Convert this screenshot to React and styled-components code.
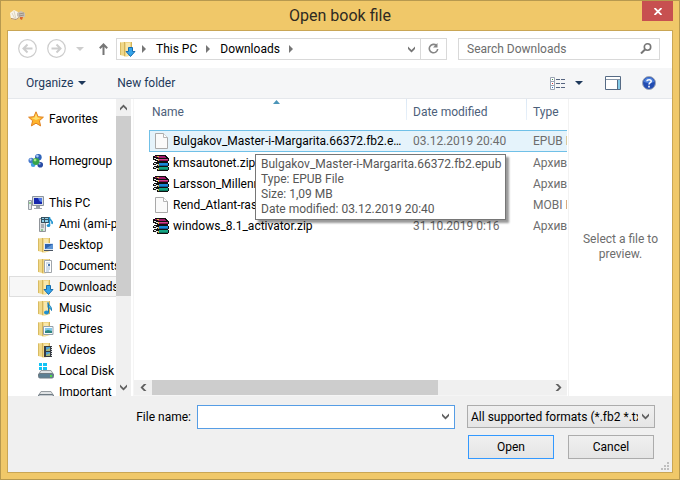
import React from "react";
import styled, { createGlobalStyle, css } from "styled-components";

const GlobalStyle = createGlobalStyle`
  *, *::before, *::after { box-sizing: border-box; }
  body { margin: 0; }
  body, button, input, select {
    font-family: Roboto, "Noto Sans", sans-serif;
    font-size: 12px;
    line-height: 16px;
    color: #000;
  }
  svg { display: block; flex: none; }
`;

const Window = styled.main`
  height: 100vh;
  display: flex;
  flex-direction: column;
  background: #f0c869;
  border: 1px solid #b7994f;
  padding: 0 6px 6px;
`;

const TitleBar = styled.header`
  flex: none;
  height: 29px;
  display: grid;
  grid-template-columns: 28px 1fr 31px;
  align-items: center;
  padding-left: 3px;
`;

const Title = styled.h1`
  margin: 0;
  font-size: 16px;
  line-height: 20px;
  font-weight: 400;
  text-align: center;
  color: #2e2a22;
`;

const CloseButton = styled.button`
  align-self: start;
  height: 20px;
  border: 0;
  padding: 0;
  display: grid;
  place-items: center;
  background: #c75050;
`;

const Client = styled.div`
  flex: 1;
  min-height: 0;
  display: flex;
  flex-direction: column;
  border: 1px solid #c9a655;
  background: #fff;
`;

const Gap = styled.span`
  flex: none;
  width: ${(p) => p.$w}px;
`;

const NavBar = styled.nav`
  flex: none;
  display: flex;
  align-items: center;
  height: 37px;
  padding: 0 12px 2px 10px;
`;

const IconButton = styled.button`
  flex: none;
  border: 0;
  padding: 0;
  background: none;
  display: grid;
  place-items: center;
  height: 21px;
  width: ${(p) => p.$w}px;
`;

const AddressBar = styled.div`
  flex: 331 1 331px;
  min-width: 0;
  height: 22px;
  display: flex;
  align-items: center;
  border: 1px solid #d9d9d9;
  padding-left: 3px;
`;

const Crumb = styled.a`
  color: #000;
  text-decoration: none;
  white-space: nowrap;
  padding: 0 3px 0 4px;
`;

const RefreshCell = styled.div`
  margin-left: auto;
  align-self: stretch;
  display: flex;
`;

const RefreshButton = styled(IconButton)`
  height: auto;
  border-left: 1px solid #d9d9d9;
`;

const SearchBox = styled.div`
  flex: 202 1 202px;
  min-width: 0;
  margin-left: 11px;
  height: 22px;
  display: flex;
  align-items: center;
  border: 1px solid #d9d9d9;
  padding: 0 4px 0 8px;
`;

const SearchInput = styled.input`
  flex: 1;
  min-width: 0;
  border: 0;
  padding: 0;
  outline: none;
  background: none;
  &::placeholder { color: #6d6d6d; opacity: 1; }
`;

const Toolbar = styled.div`
  flex: none;
  height: 31px;
  display: flex;
  align-items: center;
  background: #f5f6f7;
  border-bottom: 1px solid #e5e8ec;
  padding: 0 16px 0 18px;
`;

const ToolButton = styled.button`
  border: 0;
  padding: 0;
  background: none;
  display: flex;
  align-items: center;
  gap: ${(p) => p.$gap || 5}px;
  margin-right: ${(p) => p.$after || 0}px;
  color: #1e395b;
`;

const Spacer = styled.div`
  flex: 1;
`;

const Panes = styled.div`
  flex: 1;
  min-height: 0;
  display: flex;
`;

const Sidebar = styled.aside`
  flex: none;
  width: 123px;
  display: flex;
`;

const Tree = styled.ul`
  flex: 1;
  min-width: 0;
  margin: 0;
  padding: 9px 0 0 1px;
  list-style: none;
  overflow: hidden;
`;

const TreeItem = styled.li`
  margin-bottom: ${(p) => (p.$gap ? 21 : 0)}px;
`;

const TreeLink = styled.a`
  height: 21px;
  display: flex;
  align-items: center;
  gap: 5px;
  padding-left: ${(p) => (p.$child ? 28 : 18)}px;
  border: 1px solid transparent;
  border-right: 0;
  white-space: nowrap;
  overflow: hidden;
  color: #000;
  text-decoration: none;
  ${(p) => p.$selected && css`
    background: #f7f7f7;
    border-color: #dedede;
  `}
`;

const VScroll = styled.div`
  flex: none;
  width: 15px;
  display: flex;
  flex-direction: column;
  background: #f0f0f0;
`;

const VThumb = styled.div`
  flex: 180 1 0;
  background: #cdcdcd;
`;

const VTrack = styled.div`
  flex: 83 1 0;
`;

const HScroll = styled.div`
  flex: none;
  height: 16px;
  display: flex;
  background: #f0f0f0;
  border-bottom: 1px solid #f5f5f5;
`;

const HThumb = styled.div`
  flex: 287 1 0;
  background: #cdcdcd;
`;

const HTrack = styled.div`
  flex: 111 1 0;
`;

const ArrowButton = styled.button`
  flex: none;
  border: 0;
  padding: 0;
  background: none;
  display: grid;
  place-items: center;
  width: ${(p) => p.$w}px;
  height: ${(p) => p.$h}px;
`;

const FilePane = styled.section`
  flex: 1;
  min-width: 0;
  margin-left: 2px;
  border-left: 1px solid #f5f5f5;
  display: flex;
  flex-direction: column;
`;

const FileArea = styled.div`
  flex: 1;
  min-height: 0;
  overflow: hidden;
  position: relative;
  padding-left: 15px;
`;

const FileTable = styled.table`
  width: 600px;
  table-layout: fixed;
  border-collapse: separate;
  border-spacing: 0;
`;

const HeadCell = styled.th`
  width: ${(p) => p.$w}px;
  height: 31px;
  padding: 4px 0 0 ${(p) => p.$pad}px;
  text-align: left;
  vertical-align: top;
  font-weight: 400;
  color: #4c607a;
  line-height: 18px;
  background: linear-gradient(#dbe8f5, #e8f1fa) no-repeat right top;
  background-size: ${(p) => (p.$w ? "1px 21px" : "0 0")};
`;

const SortMark = styled.svg`
  position: absolute;
  left: 139px;
  top: 1px;
`;

const Row = styled.tr`
  td {
    height: 21px;
    padding: 0 0 0 6px;
    white-space: nowrap;
    overflow: hidden;
    color: #6d6d6d;
    border-top: 1px solid transparent;
    border-bottom: 1px solid transparent;
  }
  td:first-child { padding-left: 4px; color: #000; }
  ${(p) => p.$selected && css`
    td {
      height: 22px;
      background: #e5f3fb;
      border-color: #70c0e7;
    }
    td:first-child {
      border-left: 1px solid #70c0e7;
      padding-left: 3px;
    }
  `}
`;

const FileName = styled.span`
  display: flex;
  align-items: center;
  gap: 4px;
  line-height: 16px;
`;

const FileLabel = styled.span`
  overflow: hidden;
  text-overflow: ellipsis;
`;

const Tooltip = styled.div`
  position: absolute;
  left: 121px;
  top: 55px;
  padding: 2px 4px 2px 5px;
  border: 1px solid #767676;
  background: #fff;
  color: #575757;
  line-height: 15px;
  white-space: nowrap;
  box-shadow: 3px 3px 2px rgba(0, 0, 0, 0.4);
`;

const Preview = styled.aside`
  flex: none;
  width: 104px;
  margin-left: 1px;
  border-left: 1px solid #f2f2f2;
  display: grid;
  place-items: center;
  padding: 0 8px 2px;
  text-align: center;
  line-height: 15px;
  color: #6d6d6d;
`;

const Footer = styled.footer`
  flex: none;
  height: 76px;
  background: #f0f0f0;
  display: grid;
  grid-template-columns: 181px 1fr 188px;
  grid-template-rows: 24px 24px;
  row-gap: 6px;
  padding: 9px 17px 0 8px;
  position: relative;
`;

const NameLabel = styled.label`
  justify-self: end;
  align-self: center;
  padding-right: 6px;
`;

const NameCombo = styled.div`
  display: flex;
  background: #fff;
  border: 1px solid #569de5;
  margin-right: 12px;
`;

const NameInput = styled.input`
  flex: 1;
  min-width: 0;
  border: 0;
  outline: none;
  background: none;
  padding: 0 4px;
`;

const FormatField = styled.div`
  display: grid;
  height: 23px;
  align-items: center;
  border: 1px solid #acacac;
  background: linear-gradient(#f0f0f0, #e5e5e5);
  > * { grid-area: 1 / 1; }
  > svg { justify-self: end; margin-right: 4px; pointer-events: none; }
`;

const FormatSelect = styled.select`
  appearance: none;
  min-width: 0;
  width: calc(100% - 16px);
  height: 21px;
  border: 0;
  outline: none;
  padding: 0 0 0 3px;
  background: none;
  overflow: hidden;
  text-overflow: clip;
`;

const Actions = styled.div`
  grid-column: 3;
  display: grid;
  grid-template-columns: 1fr 1fr;
  gap: 14px;
  padding: 0 1px;
`;

const DialogButton = styled.button`
  border: 1px solid ${(p) => (p.$primary ? "#3399ff" : "#acacac")};
  background: linear-gradient(#f0f0f0, #e5e5e5);
  padding: 0 0 1px;
`;

const Grip = styled.svg`
  position: absolute;
  right: 3px;
  bottom: 2px;
`;

function Chevron({ dir = "down", color = "#606060" }) {
  const turn = { down: 0, left: 90, up: 180, right: 270 }[dir];
  return (
    <svg width="9" height="9" viewBox="0 0 9 9" aria-hidden="true">
      <path d="M1 1.500v2.600l3.500 3.400L8 4.100V1.500L4.500 5z" fill={color} transform={`rotate(${turn} 4.5 4.5)`} />
    </svg>
  );
}

function Triangle({ dir = "down", color }) {
  return dir === "down" ? (
    <svg width="8" height="4" viewBox="0 0 8 4" aria-hidden="true"><path d="M0 0h8L4 4z" fill={color} /></svg>
  ) : (
    <svg width="4" height="8" viewBox="0 0 4 8" aria-hidden="true"><path d="M0 0v8l4-4z" fill={color} /></svg>
  );
}

function CircleArrow({ back }) {
  return (
    <svg width="19" height="19" viewBox="0 0 19 19" fill="none" stroke="#cdcdcd" aria-hidden="true">
      <circle cx="9.5" cy="9.5" r="8.8" strokeWidth="1.2" />
      <path
        d={back ? "M14.5 9.5H6M9.5 5.5l-4 4 4 4" : "M4.5 9.5H13M9.5 5.5l4 4-4 4"}
        strokeWidth="2"
      />
    </svg>
  );
}

const overlays = {
  desktop: (
    <g>
      <path d="M6 6h9v7H6z" fill="#dfe8f1" />
      <path d="M7 7h8v5H7z" fill="#2d62ae" />
      <path d="M7 12l8-5v5z" fill="#5c93d4" />
      <path d="M6 13h9v1H6z" fill="#4b5563" />
    </g>
  ),
  documents: (
    <g>
      <path d="M6.5 2.5h7v12h-7z" fill="#fff" stroke="#a0a5aa" />
      <path d="M8 5h4M8 7h1M8 9h4M8 11h4M8 13h3" stroke="#9db8d8" />
      <path d="M10 6h2v2h-2z" fill="#4775ad" />
    </g>
  ),
  downloads: <path d="M8.5 6.500h4v4h2.500l-4.500 5-4.500-5h2.500z" fill="#35a4ea" stroke="#176dae" />,
  music: (
    <g>
      <path d="M10 2.500c0 3 4 3 3.500 8-.5-2-2-2.500-3.500-3z" fill="#4fbce9" stroke="#1c7fb7" />
      <ellipse cx="8.500" cy="12.500" rx="2.500" ry="2" fill="#2291ce" />
      <path d="M10.500 4v8.500" stroke="#1878b4" />
    </g>
  ),
  pictures: (
    <g>
      <path d="M5.500 5.500h9.500v8H5.500z" fill="#f8fafb" stroke="#95a0aa" />
      <path d="M7 7h7v5H7z" fill="#80c8e9" />
      <path d="M7 12v-2l3-1 4 1v2z" fill="#2e8780" />
    </g>
  ),
  videos: (
    <g>
      <path d="M6 4h8v11H6z" fill="#373b42" />
      <path d="M8 5h4v4H8zM8 10h4v4H8z" fill="#4da0d8" />
      <path d="M8 8l4-2v3H8zM8 13l4-2v3H8z" fill="#a6b879" />
      <path d="M13.500 5v10" stroke="#dce1e7" strokeDasharray="1 1" />
    </g>
  ),
};

function FolderIcon({ kind }) {
  return (
    <svg width="16" height="16" viewBox="0 0 16 16" aria-hidden="true">
      <path d="M0 1.500l4-.5v14l-4-1z" fill="#f0d888" />
      <path d="M0 1.500h1V14H0z" fill="#d9bb62" />
      <path d="M4 1h8v13l-5 1.500H4z" fill="#efd585" />
      <path d="M6 2h4v12l-4 1z" fill="#f8e7ab" />
      <path d="M4.500 1v14" stroke="#d3b35a" />
      <path d="M11.500 1v13" stroke="#d3b35a" />
      {overlays[kind]}
    </svg>
  );
}

function StarIcon() {
  return (
    <svg width="16" height="16" viewBox="0 0 16 16" aria-hidden="true">
      <path d="M8 .8l2.100 4.900 5.300.5-4 3.500 1.200 5.200L8 12.200l-4.600 2.700 1.200-5.200-4-3.500 5.300-.5z" fill="#ffb52c" stroke="#e08121" strokeLinejoin="round" />
      <path d="M8 2.500l1.400 4 3.600.500-5 2-4.500-2 3.200-.4z" fill="#ffdf6f" />
    </svg>
  );
}

function HomegroupIcon() {
  return (
    <svg width="16" height="16" viewBox="0 0 17 16" aria-hidden="true">
      <circle cx="11" cy="4" r="3.500" fill="#2f65ba" />
      <circle cx="3.500" cy="7.500" r="3" fill="#4679cd" />
      <circle cx="5.500" cy="12" r="2.500" fill="#41a0de" />
      <circle cx="13" cy="12" r="3" fill="#294ba4" />
      <circle cx="8.500" cy="8.500" r="3.700" fill="#37a54a" />
      <circle cx="10" cy="2.800" r="1.400" fill="#a7cbf3" />
      <circle cx="2.800" cy="6.500" r="1.200" fill="#bcd5f7" />
      <circle cx="7.500" cy="7" r="1.500" fill="#a5e58c" />
      <circle cx="12.300" cy="11" r="1.100" fill="#8bb1ea" />
    </svg>
  );
}

function PcIcon() {
  return (
    <svg width="16" height="16" viewBox="0 0 16 16" aria-hidden="true">
      <path d="M4.500 1.500h11v9h-11z" fill="#dadfe4" stroke="#8b949d" />
      <path d="M6 3h8v6H6z" fill="#1527ac" />
      <path d="M10 3h4v4c-2 0-3-1-4-4z" fill="#507be7" />
      <path d="M8 11h4v2h2v1H6v-1h2z" fill="#9ba3ab" />
      <path d="M.5 5.500h3v9h-3z" fill="#e3e7ea" stroke="#969da4" />
      <path d="M1 8h2" stroke="#45b43e" />
    </svg>
  );
}

function MediaPcIcon() {
  return (
    <svg width="16" height="16" viewBox="0 0 16 16" aria-hidden="true">
      <path d="M1.500 2.500h6v13h-6z" fill="#dcdfe1" stroke="#8f9499" />
      <path d="M3 9h3M3 11h3" stroke="#777d83" />
      <path d="M3 14h2" stroke="#3eaf42" />
      <path d="M3 1h8v6H3z" fill="#37505f" />
      <path d="M4 2h2v1H4zM7 2h3v1H7zM4 4h2v2H4zM7 4h3v2H7z" fill="#8ed0ea" />
      <path d="M11.500 1v8M11.500 2c0 2 3.500 2 2.500 6" stroke="#1d92cf" strokeWidth="1.500" fill="none" />
      <ellipse cx="10.500" cy="9.500" rx="1.800" ry="1.500" fill="#1d92cf" />
    </svg>
  );
}

function DiskIcon({ system }) {
  return (
    <svg width="16" height="16" viewBox="0 0 16 16" aria-hidden="true">
      <path d="M3 7.500h10l2.500 4H.5z" fill="#e0e3e5" stroke="#979da1" />
      {system && <path d="M1 0h3v3H1zM5 0h4v3H5zM1 4h3v3H1zM5 4h4v3H5z" fill="#12c3f4" />}
      <rect x=".5" y="10.500" width="15" height="4.500" rx="1.500" fill={system ? "#5d7f93" : "#c6cbd0"} stroke="#6e7a82" />
      <path d="M12 12h2v2h-2z" fill="#52db45" />
    </svg>
  );
}

function PageIcon() {
  return (
    <svg width="16" height="16" viewBox="0 0 16 16" aria-hidden="true">
      <path d="M2.500.5h8l4 4v11h-12z" fill="#fafafa" stroke="#a9a9a9" />
      <path d="M10.500.5v4h4" fill="#fff" stroke="#b5b5b5" />
    </svg>
  );
}

function BookLayer({ y, face, shade }) {
  return (
    <g transform={`translate(0 ${y})`}>
      <path d="M1 0h14v1h1v3h-1v1H4V4H2V3H0V1h1z" fill="#101010" />
      <path d="M1 1h2v1h2v1H3V2H1zM2 3h2v1H2z" fill="#e9e9e9" />
      <path d="M6 1h9v2H6z" fill={face} />
      <path d="M6 3h9v1H6z" fill={shade} />
      <path d="M5 2h1v2H5z" fill="#c9b24a" />
    </g>
  );
}

function ArchiveIcon() {
  return (
    <svg width="16" height="16" viewBox="0 0 16 16" shapeRendering="crispEdges" aria-hidden="true">
      <BookLayer y={11} face="#14a383" shade="#0b7a61" />
      <BookLayer y={7} face="#1a86d8" shade="#0f5c9e" />
      <path d="M2 0h11v1h1v1h1v1h1v3h-1v1H4V6H2V5H0V1h2z" fill="#101010" />
      <path d="M2 1h10v1h1v1H5V2H2z" fill="#a3186a" />
      <path d="M1 3h2v1h2v1H3V4H1z" fill="#e9e9e9" />
      <path d="M6 4h9v1H6z" fill="#d0468f" />
      <path d="M6 5h9v1H6z" fill="#8e1257" />
      <path d="M4 1h2v1H4zM5 4h1v2H5z" fill="#e8bd43" />
    </svg>
  );
}

function BookIcon() {
  return (
    <svg width="16" height="16" viewBox="0 0 16 16" aria-hidden="true">
      <path d="M0 5l4-3 4 2 1 6-3 2-5-1z" fill="#f8f4e9" />
      <path d="M1 10l5 1 3-2v1l-3 2-5-1z" fill="#b48c5d" />
      <path d="M4 3l2 8M2 5l3 6" stroke="#ddd4c0" fill="none" />
      <path d="M7 5l4-2 4 2v4l-5 1-3-2z" fill="#c9c0b4" />
      <path d="M9 6l5-1M9 8l5-1" stroke="#9a8f84" />
      <path d="M10 9l3 0-1 3-2-1z" fill="#db642d" />
    </svg>
  );
}

const places = [
  { label: "Favorites", icon: <StarIcon />, gap: true },
  { label: "Homegroup", icon: <HomegroupIcon />, gap: true },
  { label: "This PC", icon: <PcIcon /> },
  { label: "Ami (ami-pc)", icon: <MediaPcIcon />, child: true },
  { label: "Desktop", icon: <FolderIcon kind="desktop" />, child: true },
  { label: "Documents", icon: <FolderIcon kind="documents" />, child: true },
  { label: "Downloads", icon: <FolderIcon kind="downloads" />, child: true, selected: true },
  { label: "Music", icon: <FolderIcon kind="music" />, child: true },
  { label: "Pictures", icon: <FolderIcon kind="pictures" />, child: true },
  { label: "Videos", icon: <FolderIcon kind="videos" />, child: true },
  { label: "Local Disk", icon: <DiskIcon system />, child: true },
  { label: "Important", icon: <DiskIcon />, child: true },
];

const files = [
  { name: "Bulgakov_Master-i-Margarita.66372.fb2.epub", date: "03.12.2019 20:40", type: "EPUB File", selected: true },
  { name: "kmsautonet.zip", date: "", type: "Архив ZIP", archive: true },
  { name: "Larsson_Millennium.zip", date: "", type: "Архив ZIP", archive: true },
  { name: "Rend_Atlant-raspravil", date: "", type: "MOBI File" },
  { name: "windows_8.1_activator.zip", date: "31.10.2019 0:16", type: "Архив ZIP", archive: true },
];

export default function App() {
  return (
    <>
      <GlobalStyle />
      <Window>
        <TitleBar>
          <BookIcon />
          <Title>Open book file</Title>
          <CloseButton aria-label="Close">
            <svg width="8" height="7" viewBox="0 0 8 7" aria-hidden="true">
              <path d="M.5 0l7 7M7.500 0l-7 7" stroke="#fff" strokeWidth="1.800" />
            </svg>
          </CloseButton>
        </TitleBar>
        <Client>
          <NavBar aria-label="Location">
            <IconButton $w={19} aria-label="Back"><CircleArrow back /></IconButton>
            <Gap $w={10} />
            <IconButton $w={19} aria-label="Forward"><CircleArrow /></IconButton>
            <IconButton $w={28} aria-label="Recent locations"><Triangle color="#cdcdcd" /></IconButton>
            <IconButton $w={18} aria-label="Up">
              <svg width="9" height="12" viewBox="0 0 9 12" aria-hidden="true">
                <path d="M4.500 12V2M.8 5.200l3.700-3.700 3.700 3.700" fill="none" stroke="#767676" strokeWidth="2" />
              </svg>
            </IconButton>
            <Gap $w={4} />
            <AddressBar>
              <FolderIcon kind="downloads" />
              <IconButton $w={16} aria-label="Show places"><Triangle dir="right" color="#767676" /></IconButton>
              <Crumb href="#pc">This PC</Crumb>
              <IconButton $w={16} aria-label="Show folders in This PC"><Triangle dir="right" color="#767676" /></IconButton>
              <Crumb href="#downloads">Downloads</Crumb>
              <IconButton $w={16} aria-label="Show folders in Downloads"><Triangle dir="right" color="#767676" /></IconButton>
              <RefreshCell>
                <IconButton $w={18} aria-label="Previous locations"><Chevron color="#767676" /></IconButton>
                <RefreshButton $w={26} aria-label="Refresh">
                  <svg width="11" height="11" viewBox="0 0 11 11" aria-hidden="true">
                    <path d="M8.500 2.600A4.200 4.200 0 1 0 9.700 6" fill="none" stroke="#858585" strokeWidth="1.600" />
                    <path d="M9.500 0v4.500H5z" fill="#858585" />
                  </svg>
                </RefreshButton>
              </RefreshCell>
            </AddressBar>
            <SearchBox>
              <SearchInput aria-label="Search Downloads" placeholder="Search Downloads" />
              <IconButton $w={18} aria-label="Search">
                <svg width="12" height="11" viewBox="0 0 12 11" aria-hidden="true">
                  <circle cx="7.500" cy="4" r="3.200" fill="none" stroke="#767676" strokeWidth="1.600" />
                  <path d="M5 6.500L1 10.500" stroke="#767676" strokeWidth="2" />
                </svg>
              </IconButton>
            </SearchBox>
          </NavBar>
          <Toolbar>
            <ToolButton $after={31}>Organize <Triangle color="#1e395b" /></ToolButton>
            <ToolButton>New folder</ToolButton>
            <Spacer />
            <ToolButton $after={22} $gap={9} aria-label="Change view">
              <svg width="16" height="13" viewBox="0 0 16 13" aria-hidden="true">
                <path d="M.5.5h4v4h-4zM.5 4.500h4v4h-4zM.5 8.500h4v4h-4z" fill="#fff" stroke="#9aa4b3" />
                <path d="M2 2h1v1H2z" fill="#45934b" />
                <path d="M2 6h1v1H2z" fill="#d12b2b" />
                <path d="M2 10h1v1H2z" fill="#2b67b8" />
                <path d="M6 2.500h4M11 2.500h4M6 6.500h4M11 6.500h4M6 10.500h4M11 10.500h4" stroke="#566580" />
              </svg>
              <Triangle color="#1e395b" />
            </ToolButton>
            <ToolButton $after={21} aria-label="Preview pane">
              <svg width="16" height="14" viewBox="0 0 16 14" aria-hidden="true">
                <path d="M.5.5h15v13H.5z" fill="#fff" stroke="#566b85" />
                <path d="M1 3.500h14" stroke="#8796a8" />
                <path d="M13 4h2v9h-2z" fill="#83cbe8" />
                <path d="M12.500 4v9" stroke="#566b85" />
              </svg>
            </ToolButton>
            <ToolButton aria-label="Help">
              <svg width="14" height="14" viewBox="0 0 14 14" aria-hidden="true">
                <circle cx="7" cy="7" r="6.500" fill="#234db2" stroke="#a0a8b6" />
                <path d="M2 6a5 4.500 0 0 1 10 0c-3 1.500-7 1.500-10 0z" fill="#4d81dc" />
                <path d="M4.800 5.300C5 3.200 9.300 3 9.200 5.300 9 6.800 7 6.700 7 8.600" fill="none" stroke="#fff" strokeWidth="1.500" />
                <path d="M6.200 9.800h1.600v1.600H6.200z" fill="#fff" />
              </svg>
            </ToolButton>
          </Toolbar>
          <Panes>
            <Sidebar>
              <Tree aria-label="Places">
                {places.map((p) => (
                  <TreeItem key={p.label} $gap={p.gap}>
                    <TreeLink href="#place" $child={p.child} $selected={p.selected}>
                      {p.icon}
                      {p.label}
                    </TreeLink>
                  </TreeItem>
                ))}
              </Tree>
              <VScroll>
                <ArrowButton $w={15} $h={17} aria-label="Scroll up"><Chevron dir="up" /></ArrowButton>
                <VThumb />
                <VTrack />
                <ArrowButton $w={15} $h={17} aria-label="Scroll down"><Chevron /></ArrowButton>
              </VScroll>
            </Sidebar>
            <FilePane>
              <FileArea>
                <FileTable>
                  <thead>
                    <tr>
                      <HeadCell $w={258} $pad={3}>Name</HeadCell>
                      <HeadCell $w={120} $pad={6}>Date modified</HeadCell>
                      <HeadCell $pad={6}>Type</HeadCell>
                    </tr>
                  </thead>
                  <tbody>
                    {files.map((f) => (
                      <Row key={f.name} $selected={f.selected}>
                        <td>
                          <FileName>
                            {f.archive ? <ArchiveIcon /> : <PageIcon />}
                            <FileLabel>{f.name}</FileLabel>
                          </FileName>
                        </td>
                        <td>{f.date}</td>
                        <td>{f.type}</td>
                      </Row>
                    ))}
                  </tbody>
                </FileTable>
                <SortMark width="7" height="4" viewBox="0 0 7 4" aria-hidden="true">
                  <path d="M3.500 0L7 4H0z" fill="#4b95b8" />
                </SortMark>
                <Tooltip role="tooltip">
                  Bulgakov_Master-i-Margarita.66372.fb2.epub<br />
                  Type: EPUB File<br />
                  Size: 1,09 MB<br />
                  Date modified: 03.12.2019 20:40
                </Tooltip>
              </FileArea>
              <HScroll>
                <ArrowButton $w={18} $h={15} aria-label="Scroll left"><Chevron dir="left" /></ArrowButton>
                <HThumb />
                <HTrack />
                <ArrowButton $w={18} $h={15} aria-label="Scroll right"><Chevron dir="right" /></ArrowButton>
              </HScroll>
            </FilePane>
            <Preview>Select a file to preview.</Preview>
          </Panes>
          <Footer>
            <NameLabel htmlFor="file-name">File name:</NameLabel>
            <NameCombo>
              <NameInput id="file-name" />
              <IconButton $w={17} aria-label="Recent names"><Chevron /></IconButton>
            </NameCombo>
            <FormatField>
              <FormatSelect aria-label="File format">
                <option>All supported formats (*.fb2 *.txt *.epub)</option>
              </FormatSelect>
              <Chevron />
            </FormatField>
            <Actions>
              <DialogButton $primary>Open</DialogButton>
              <DialogButton>Cancel</DialogButton>
            </Actions>
            <Grip width="8" height="8" viewBox="0 0 8 8" aria-hidden="true">
              <path d="M6 0h2v2H6zM3 3h2v2H3zM6 3h2v2H6zM0 6h2v2H0zM3 6h2v2H3zM6 6h2v2H6z" fill="#bfbfbf" />
            </Grip>
          </Footer>
        </Client>
      </Window>
    </>
  );
}
